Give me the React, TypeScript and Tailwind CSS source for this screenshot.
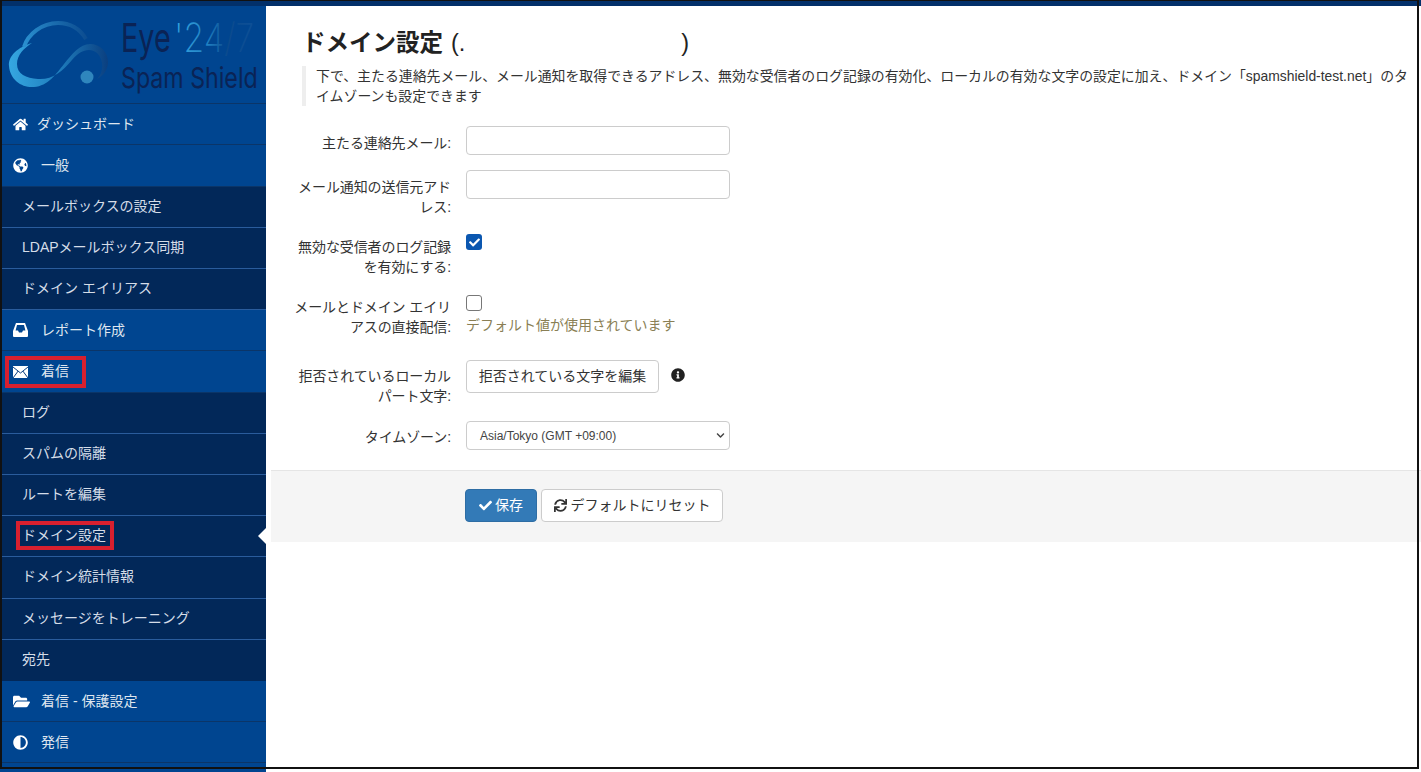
import { FaHome, FaGlobeAmericas, FaFolderOpen, FaAdjust, FaSync, FaCheck, FaInfoCircle, FaChevronDown } from 'react-icons/fa';
import type { ReactNode } from 'react';

const jp = "font-['Liberation_Sans','Noto_Sans_CJK_JP',sans-serif]";

function Logo() {
  return (
    <svg width="266" height="98" viewBox="0 6 266 98" className="block">
      <defs>
        <linearGradient id="swoosh" gradientUnits="userSpaceOnUse" x1="10" y1="60" x2="108" y2="60">
          <stop offset="0" stopColor="#35a6e0" />
          <stop offset="0.5" stopColor="#1f7dbd" />
          <stop offset="1" stopColor="#0a3f80" />
        </linearGradient>
        <linearGradient id="arc" gradientUnits="userSpaceOnUse" x1="24" y1="40" x2="88" y2="30">
          <stop offset="0" stopColor="#2a8fcf" />
          <stop offset="1" stopColor="#0b4a8e" />
        </linearGradient>
        <linearGradient id="nums" gradientUnits="userSpaceOnUse" x1="0" y1="0" x2="90" y2="0">
          <stop offset="0" stopColor="#38a8e2" />
          <stop offset="0.45" stopColor="#2080c2" />
          <stop offset="0.7" stopColor="#0c4a8c" />
          <stop offset="1" stopColor="#0d4f96" />
        </linearGradient>
      </defs>
      <path
        d="M32 43 C18 47 8 56 9 66 C10 80 22 88 34 87 C48 86 56 74 64 64 C72 54 80 44 90 44 C100 44 108 52 108 62 C108 70 103 76 97 79 C104 72 104 60 97 53 C90 47 80 50 72 60 C62 72 52 80 38 79 C26 78 17 74 17 64 C17 55 24 48 32 43 Z"
        fill="url(#swoosh)"
      />
      <path d="M24 47 C28 34 42 23 58 23 C70 23 80 29 86 39" fill="none" stroke="url(#arc)" strokeWidth="4" />
      <circle cx="87" cy="77" r="6.5" fill="#2f86bd" />
      <text transform="translate(121 52) scale(0.72 1)" fontFamily="Inter,sans-serif" fontWeight="400" fontSize="40" fill="#0a2355">Eye</text>
      <text transform="translate(174 52) scale(0.84 1)" fontFamily="Inter,sans-serif" fontWeight="200" fontSize="40" fill="url(#nums)">'24/7</text>
      <text transform="translate(121 88) scale(0.8 1)" fontFamily="Inter,sans-serif" fontWeight="400" fontSize="29" fill="#0a2355">Spam Shield</text>
    </svg>
  );
}

function InboxIcon() {
  return (
    <svg width="15" height="14" viewBox="0 0 15 14" className="block">
      <path
        fillRule="evenodd"
        fill="#fff"
        d="M3 0 H12 L15 8 V13 Q15 14 14 14 H1 Q0 14 0 13 V8 Z M4 2 L2.6 7.5 H5 L6 9.5 H9 L10 7.5 H12.4 L11 2 Z"
      />
    </svg>
  );
}

function EnvelopeIcon() {
  return (
    <svg width="15" height="12" viewBox="0 0 15 12" className="block">
      <rect width="15" height="12" fill="#fff" />
      <path d="M0 1 L7.5 7 L15 1 M0 12 L5.2 5 M15 12 L9.8 5" fill="none" stroke="#0b3f80" strokeWidth="1" />
    </svg>
  );
}

function TopItem({ icon, label, gap = 'w-[28px]' }: { icon: ReactNode; label: string; gap?: string }) {
  return (
    <div className="h-[41.2px] flex items-center pl-[13px] bg-[#004590] border-b border-[#0b3568] text-[14px] text-[#dfe6ef]">
      <span className={`${gap} shrink-0 text-white text-[15px]`}>{icon}</span>
      {label}
    </div>
  );
}

function SubItem({ label, active, last }: { label: string; active?: boolean; last?: boolean }) {
  return (
    <div className={`relative h-[41.2px] flex items-center pl-[22px] pb-[1px] bg-[#022859] border-b text-[14px] text-[#d5dde8] ${last ? 'border-[#022859]' : 'border-[#2a5c9c]'}`}>
      {label}
      {active && (
        <span className="absolute right-0 top-[12px] border-y-[8px] border-y-transparent border-r-[8px] border-r-white" />
      )}
    </div>
  );
}

function Row({ label, className, children }: { label: ReactNode; className: string; children: ReactNode }) {
  return (
    <div className={`flex ${className}`}>
      <label className="w-[157px] shrink-0 text-right text-[14px] leading-[20px] tracking-[-0.1px] text-[#333]">{label}</label>
      <div className="ml-[15px] flex-1">{children}</div>
    </div>
  );
}

function TextBox() {
  return <input className="block w-[264px] h-[29px] bg-white border border-[#ccc] rounded-[4px]" />;
}

export default function App() {
  return (
    <div className={`relative w-[1421px] h-[772px] overflow-hidden bg-white flex flex-col ${jp}`}>
      <div className="h-[6px] shrink-0 bg-[#02306a]" />
      <div className="flex flex-1 min-h-0">
        <aside className="w-[266px] shrink-0 bg-[#004590]">
          <div className="h-[98.3px] border-b border-[#0b3568]">
            <Logo />
          </div>
          <TopItem icon={<FaHome />} label="ダッシュボード" gap="w-[24px]" />
          <TopItem icon={<FaGlobeAmericas />} label="一般" />
          <SubItem label="メールボックスの設定" />
          <SubItem label="LDAPメールボックス同期" />
          <SubItem label="ドメイン エイリアス" />
          <TopItem icon={<InboxIcon />} label="レポート作成" />
          <TopItem icon={<EnvelopeIcon />} label="着信" />
          <SubItem label="ログ" />
          <SubItem label="スパムの隔離" />
          <SubItem label="ルートを編集" />
          <SubItem label="ドメイン設定" active />
          <SubItem label="ドメイン統計情報" />
          <SubItem label="メッセージをトレーニング" />
          <SubItem label="宛先" last />
          <TopItem icon={<FaFolderOpen className="text-[17px]" />} label="着信 - 保護設定" />
          <TopItem icon={<FaAdjust />} label="発信" />
        </aside>

        <main className="flex-1 min-w-0 text-[#333]">
          <h1 className="ml-[36px] mt-[23px] h-[30px] flex items-center text-[23.5px] font-bold text-[#222]">
            ドメイン設定 <span className="ml-[8px] font-normal">(.</span>
            <span className="ml-[216px] font-normal">)</span>
          </h1>
          <div className="ml-[36px] mt-[7px] w-[1110px] border-l-[4px] border-[#eee] pl-[10px] text-[13.9px] leading-[20px] text-[#333]">
            下で、主たる連絡先メール、メール通知を取得できるアドレス、無効な受信者のログ記録の有効化、ローカルの有効な文字の設定に加え、ドメイン「spamshield-test.net」のタイムゾーンも設定できます
          </div>

          <div className="mt-[20px] ml-[28px]">
            <Row label="主たる連絡先メール:" className="h-[44px] items-start [&>label]:pt-[7px]">
              <TextBox />
            </Row>
            <Row label={<>メール通知の送信元アドレス:</>} className="h-[64px] [&>label]:pt-[7px]">
              <TextBox />
            </Row>
            <Row label={<>無効な受信者のログ記録を有効にする:</>} className="h-[61px] [&>label]:pt-[3px]">
              <div className="w-[16px] h-[16px] rounded-[3px] bg-[#0b57b0] flex items-center justify-center text-white text-[11px]">
                <FaCheck />
              </div>
            </Row>
            <Row label={<>メールとドメイン エイリアスの直接配信:</>} className="h-[65px] [&>label]:pt-[2px]">
              <div className="w-[16px] h-[16px] rounded-[3px] bg-white border border-[#777]" />
              <div className="mt-[4px] text-[14px] leading-[20px] text-[#8a7f55]">デフォルト値が使用されています</div>
            </Row>
            <Row label={<>拒否されているローカルパート文字:</>} className="h-[61px] [&>label]:pt-[6px]">
              <div className="flex items-start">
                <button className="w-[193px] h-[33px] bg-white border border-[#ccc] rounded-[4px] text-[14px] text-[#333]">拒否されている文字を編集</button>
                <FaInfoCircle className="ml-[12px] mt-[8px] text-[14px] text-[#222]" />
              </div>
            </Row>
            <Row label="タイムゾーン:" className="h-[49px] [&>label]:pt-[6px]">
              <div className="w-[264px] h-[29px] bg-white border border-[#ccc] rounded-[4px] flex items-center justify-between pl-[13px] pr-[4px] text-[12px] text-[#444]">
                Asia/Tokyo (GMT +09:00)
                <FaChevronDown className="text-[9px]" />
              </div>
            </Row>
          </div>

          <div className="ml-[5px] h-[72px] bg-[#f5f5f5] border-t border-[#e5e5e5] flex items-start pt-[18px] pl-[194px]">
            <button className="h-[33px] w-[72px] bg-[#337ab7] border border-[#2e6da4] rounded-[4px] text-white text-[14px] flex items-center justify-center gap-[3px]">
              <FaCheck className="text-[13px]" />保存
            </button>
            <button className="ml-[4px] h-[33px] w-[182px] bg-white border border-[#ccc] rounded-[4px] text-[14px] text-[#333] flex items-center justify-center gap-[4px]">
              <FaSync className="text-[13px]" />デフォルトにリセット
            </button>
          </div>
        </main>
      </div>

      {/* screenshot frame drawn over the page */}
      <div className="absolute left-0 top-0 w-[1419px] h-[769px] border-l-[2px] border-t-[1px] border-r-[2px] border-b-[2px] border-[#111] pointer-events-none" />
      {/* red annotation boxes */}
      <div className="absolute left-[5px] top-[356px] w-[81px] h-[32px] border-[4px] border-[#d8202f] pointer-events-none" />
      <div className="absolute left-[16px] top-[521px] w-[98px] h-[29px] border-[4px] border-[#d8202f] pointer-events-none" />
    </div>
  );
}
